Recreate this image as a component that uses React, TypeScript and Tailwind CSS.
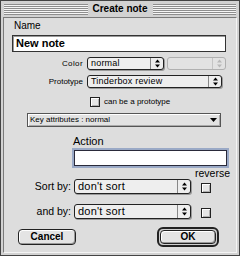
import React from "react";

const Arrows = ({ color = "#000" }: { color?: string }) => (
  <svg width="5" height="9" viewBox="0 0 5 9">
    <polygon points="0,3.5 2.5,0.5 5,3.5" fill={color} />
    <polygon points="0,5.5 2.5,8.5 5,5.5" fill={color} />
  </svg>
);

const Popup = ({
  w,
  text,
  h = "h-[13px]",
  size = "text-[9px]",
  disabled = false,
}: {
  w: string;
  text: string;
  h?: string;
  size?: string;
  disabled?: boolean;
}) => (
  <div
    className={`${w} ${h} flex rounded-[3px] border ${
      disabled ? "border-[#b0b0b0] bg-[#e2e2e2]" : "border-[#222] bg-[#eeeeee] shadow-[1px_1px_0_#9a9a9a]"
    }`}
  >
    <div className={`flex-1 flex items-center pl-[3px] ${size} leading-none text-black tracking-[0.2px]`}>{text}</div>
    <div
      className={`w-[13px] flex items-center justify-center border-l ${
        disabled ? "border-[#c4c4c4]" : "border-[#888]"
      }`}
    >
      <Arrows color={disabled ? "#b8b8b8" : "#000"} />
    </div>
  </div>
);

const Checkbox = () => (
  <div className="w-[10px] h-[10px] border border-[#222] bg-[#e6e6e6] shadow-[inset_1px_1px_0_#fff,inset_-1px_-1px_0_#b0b0b0]" />
);

export default function App() {
  const stripes =
    "bg-[repeating-linear-gradient(to_bottom,#8e8e8e_0px,#8e8e8e_1px,#f6f6f6_1px,#f6f6f6_2px)]";
  return (
    <div className="w-[240px] h-[256px] bg-[#d2d2d2] border border-[#444] flex flex-col font-['Liberation_Sans',sans-serif] text-black">
      <div className="h-[16px] flex items-center px-[3px] gap-[4px]">
        <div className={`flex-1 h-[11px] ${stripes}`} />
        <div className="text-[10px] font-bold leading-none px-[1px]">Create note</div>
        <div className={`flex-1 h-[11px] ${stripes}`} />
      </div>
      <div className="flex-1 mx-[2px] mb-[2px] border border-t-[#7a7a7a] border-l-[#7a7a7a] border-r-[#f4f4f4] border-b-[#f4f4f4] bg-[#dddddd] flex flex-col">
        <div className="mt-[2px] ml-[10px] h-[12px] text-[10px] leading-[12px]">Name</div>
        <div className="mt-[3px] ml-[8px] w-[214px] h-[17px] border border-[#333] bg-white shadow-[inset_1px_1px_0_#999] flex items-center pl-[3px] text-[11px] font-bold leading-none">
          New note
        </div>

        <div className="mt-[5px] h-[13px] flex items-center">
          <div className="w-[79px] text-right text-[8px] tracking-[0.4px] leading-none">Color</div>
          <div className="ml-[4px]">
            <Popup w="w-[77px]" text="normal" />
          </div>
          <div className="ml-[3px]">
            <Popup w="w-[59px]" text="" disabled />
          </div>
        </div>

        <div className="mt-[5px] h-[13px] flex items-center">
          <div className="w-[79px] text-right text-[8px] leading-none">Prototype</div>
          <div className="ml-[4px]">
            <Popup w="w-[135px]" text="Tinderbox review" />
          </div>
        </div>

        <div className="mt-[9px] h-[10px] flex items-center ml-[86px]">
          <Checkbox />
          <div className="ml-[4px] text-[8px] leading-none">can be a prototype</div>
        </div>

        <div className="mt-[6px] ml-[23px] w-[194px] h-[14px] border border-[#555] bg-[#e2e2e2] shadow-[inset_1px_1px_0_#fff,inset_-1px_-1px_0_#aaa] flex items-center pl-[2px] pr-[3px]">
          <div className="flex-1 text-[8px] leading-none">Key attributes : normal</div>
          <svg width="7" height="4" viewBox="0 0 7 4">
            <polygon points="0,0 7,0 3.5,4" fill="#000" />
          </svg>
        </div>

        <div className="mt-[7px] ml-[69px] h-[14px] text-[11px] leading-[14px]">Action</div>
        <div className="ml-[68px] w-[157px] h-[20px] bg-[#9aa9c6] p-[2px]">
          <div className="w-full h-full border border-[#2a2a3a] bg-white" />
        </div>

        <div className="w-[226px] h-[11px] text-right text-[10.5px] leading-[11px]">reverse</div>

        <div className="h-[15px] flex items-end">
          <div className="w-[67px] text-right text-[10.5px] leading-[15px] self-center">Sort by:</div>
          <div className="ml-[3px] self-center">
            <Popup w="w-[117px]" h="h-[15px]" size="text-[11px]" text="don't sort" />
          </div>
          <div className="ml-[10px] mb-[1px]">
            <Checkbox />
          </div>
        </div>

        <div className="mt-[10px] h-[15px] flex items-end">
          <div className="w-[67px] text-right text-[10.5px] leading-[15px] self-center">and by:</div>
          <div className="ml-[3px] self-center">
            <Popup w="w-[117px]" h="h-[15px]" size="text-[11px]" text="don't sort" />
          </div>
          <div className="ml-[10px] mb-[1px]">
            <Checkbox />
          </div>
        </div>

        <div className="mt-[8px] h-[20px] flex items-center">
          <div className="ml-[14px] w-[58px] h-[16px] rounded-[4px] border border-[#222] bg-[#e4e4e4] shadow-[inset_1px_1px_0_#fff,inset_-1px_-1px_0_#999] flex items-center justify-center text-[10px] font-bold leading-none">
            Cancel
          </div>
          <div className="ml-auto mr-[17px] w-[62px] h-[20px] rounded-[6px] border-[2px] border-[#222] bg-[#cfcfcf] p-[1px]">
            <div className="w-full h-full rounded-[4px] border border-[#222] bg-[#e4e4e4] shadow-[inset_1px_1px_0_#fff,inset_-1px_-1px_0_#999] flex items-center justify-center text-[10px] font-bold leading-none">
              OK
            </div>
          </div>
        </div>
      </div>
    </div>
  );
}
